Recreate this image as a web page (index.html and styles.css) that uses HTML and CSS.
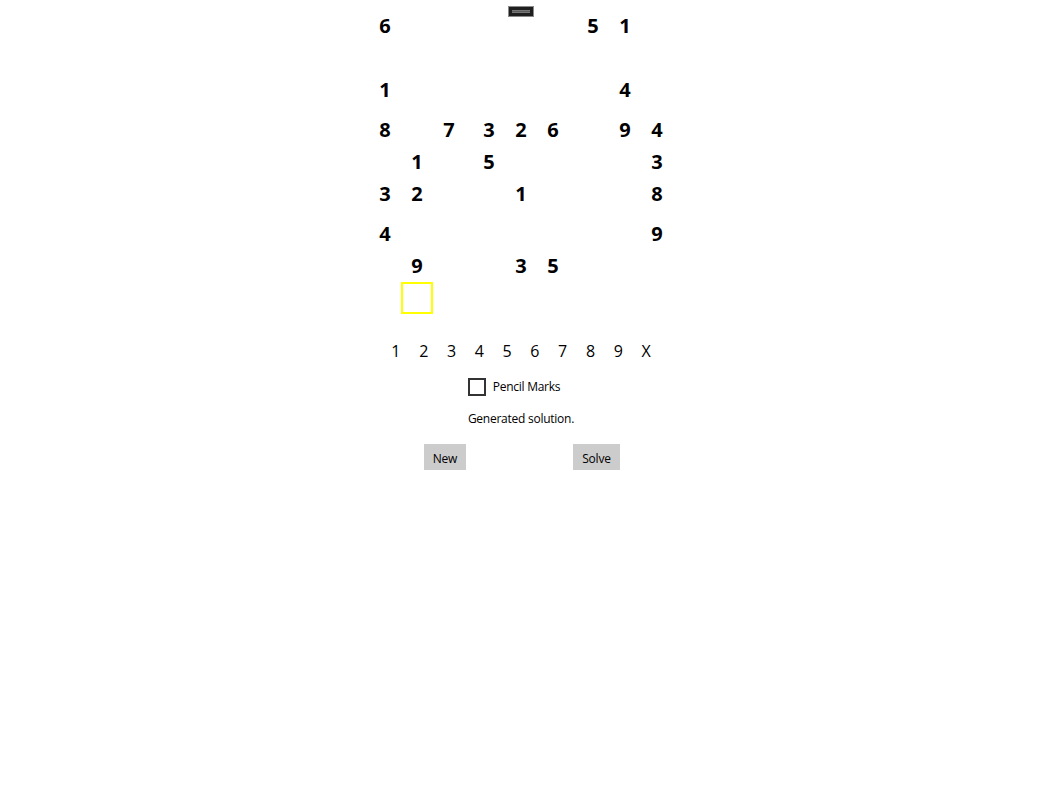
FILE: index.html
```html
<!DOCTYPE html>
<html>
<head>
<meta charset="utf-8">
<link rel="stylesheet" href="styles.css">
</head>
<body>
<div class="page">
  <div class="handle"><span class="handle-bar"></span></div>
  <div class="board">
    <div class="box">
      <div class="cell">6</div><div class="cell"></div><div class="cell"></div>
      <div class="cell"></div><div class="cell"></div><div class="cell"></div>
      <div class="cell">1</div><div class="cell"></div><div class="cell"></div>
    </div>
    <div class="box">
      <div class="cell"></div><div class="cell"></div><div class="cell"></div>
      <div class="cell"></div><div class="cell"></div><div class="cell"></div>
      <div class="cell"></div><div class="cell"></div><div class="cell"></div>
    </div>
    <div class="box">
      <div class="cell">5</div><div class="cell">1</div><div class="cell"></div>
      <div class="cell"></div><div class="cell"></div><div class="cell"></div>
      <div class="cell"></div><div class="cell">4</div><div class="cell"></div>
    </div>
    <div class="box">
      <div class="cell">8</div><div class="cell"></div><div class="cell">7</div>
      <div class="cell"></div><div class="cell">1</div><div class="cell"></div>
      <div class="cell">3</div><div class="cell">2</div><div class="cell"></div>
    </div>
    <div class="box">
      <div class="cell">3</div><div class="cell">2</div><div class="cell">6</div>
      <div class="cell">5</div><div class="cell"></div><div class="cell"></div>
      <div class="cell"></div><div class="cell">1</div><div class="cell"></div>
    </div>
    <div class="box">
      <div class="cell"></div><div class="cell">9</div><div class="cell">4</div>
      <div class="cell"></div><div class="cell"></div><div class="cell">3</div>
      <div class="cell"></div><div class="cell"></div><div class="cell">8</div>
    </div>
    <div class="box">
      <div class="cell">4</div><div class="cell"></div><div class="cell"></div>
      <div class="cell"></div><div class="cell">9</div><div class="cell"></div>
      <div class="cell"></div><div class="cell selected"></div><div class="cell"></div>
    </div>
    <div class="box">
      <div class="cell"></div><div class="cell"></div><div class="cell"></div>
      <div class="cell"></div><div class="cell">3</div><div class="cell">5</div>
      <div class="cell"></div><div class="cell"></div><div class="cell"></div>
    </div>
    <div class="box">
      <div class="cell"></div><div class="cell"></div><div class="cell">9</div>
      <div class="cell"></div><div class="cell"></div><div class="cell"></div>
      <div class="cell"></div><div class="cell"></div><div class="cell"></div>
    </div>
  </div>

  <div class="numbers">
    <span class="num">1</span><span class="num">2</span><span class="num">3</span><span class="num">4</span><span class="num">5</span><span class="num">6</span><span class="num">7</span><span class="num">8</span><span class="num">9</span><span class="num">X</span>
  </div>

  <label class="pencil"><span class="checkbox"></span><span class="pencil-label">Pencil Marks</span></label>

  <div class="status">Generated solution.</div>

  <div class="buttons">
    <button class="btn btn-new">New</button>
    <button class="btn btn-solve">Solve</button>
  </div>
</div>
</body>
</html>
```

FILE: styles.css
```css
html, body {
  margin: 0;
  padding: 0;
  background: #ffffff;
}
body {
  font-family: "Open Sans", "Noto Sans", sans-serif;
  color: #000;
  padding-left: 3px;
}
.page {
  position: relative;
  display: flex;
  flex-direction: column;
  align-items: center;
  padding-top: 10px;
}
.handle {
  position: absolute;
  top: 6px;
  left: 50%;
  margin-left: -13px;
  width: 26px;
  height: 11px;
  box-sizing: border-box;
  background: #1f1f1f;
  border: 1px solid #8a8a8a;
  display: flex;
  align-items: center;
  justify-content: center;
}
.handle-bar {
  display: block;
  width: 18px;
  height: 3px;
  background: #5a5a5a;
  border-top: 1px solid #777;
  border-bottom: 1px solid #777;
  box-sizing: border-box;
}
.board {
  display: grid;
  grid-template-columns: repeat(3, 96px);
  grid-template-rows: repeat(3, 96px);
  gap: 8px;
}
.box {
  display: grid;
  grid-template-columns: repeat(3, 32px);
  grid-template-rows: repeat(3, 32px);
}
.cell {
  display: flex;
  align-items: center;
  justify-content: center;
  font-size: 20px;
  font-weight: 700;
  line-height: 1;
  box-sizing: border-box;
}
.cell.selected {
  border: 2px solid #ffff00;
}
.numbers {
  display: flex;
  margin-top: 24px;
  gap: 0;
}
.num {
  width: 27.8px;
  text-align: center;
  font-size: 16px;
  line-height: 26px;
}
.pencil {
  display: flex;
  align-items: center;
  margin-top: 13px;
  margin-left: -14px;
}
.checkbox {
  width: 18px;
  height: 18px;
  box-sizing: border-box;
  border: 2px solid #333;
  background: #fff;
}
.pencil-label {
  font-size: 12px;
  letter-spacing: -0.25px;
  margin-left: 7px;
  line-height: 20px;
}
.status {
  font-size: 12px;
  letter-spacing: -0.25px;
  margin-top: 12px;
  line-height: 20px;
}
.buttons {
  display: flex;
  gap: 107px;
  margin-top: 15px;
  margin-left: 2px;
}
.btn {
  font-family: "Open Sans", "Noto Sans", sans-serif;
  font-size: 12px;
  letter-spacing: -0.2px;
  background: #cccccc;
  border: none;
  height: 26px;
  padding: 2px 0 0 0;
  margin: 0;
  color: #000;
}
.btn-new { width: 42px; }
.btn-solve { width: 47px; }
```
